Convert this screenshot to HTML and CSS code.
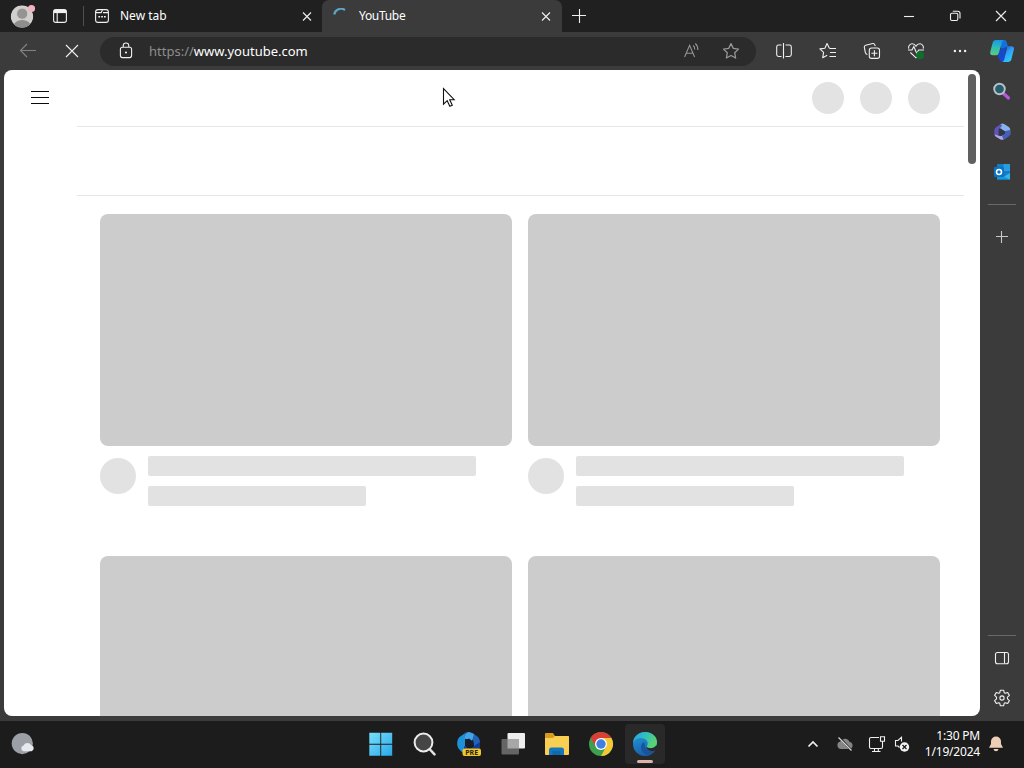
FILE: index.html
```html
<!DOCTYPE html>
<html lang="en">
<head>
    <meta charset="utf-8">
    <title>YouTube</title>
    <link rel="stylesheet" href="styles.css">
</head>
<body>
    <div class="browser">
        <header class="titlebar">
            <div class="cell profile">
                <svg width="26" height="26" viewBox="0 0 26 26">
                    <defs><clipPath id="face"><circle cx="13" cy="13.5" r="11.2"/></clipPath></defs>
                    <g clip-path="url(#face)">
                        <circle cx="13" cy="13.5" r="11.3" fill="#d0cfcd"/>
                        <ellipse cx="13.2" cy="23" rx="8.6" ry="6" fill="#8e8d8b"/>
                        <circle cx="13.2" cy="10.7" r="5.6" fill="#959492" stroke="#d0cfcd"/>
                    </g>
                    <circle cx="22.5" cy="5.5" r="3.6" fill="#f5b3c2"/>
                </svg>
            </div>
            <div class="cell workspaces">
                <svg width="16" height="16" viewBox="0 0 16 16" class="line">
                    <rect x="1.6" y="1.6" width="12.8" height="12.8" rx="2.2"/>
                    <path d="M2 3.5h12" stroke-width="3.2"/>
                    <path d="M5.2 4v10"/>
                </svg>
            </div>
            <div class="divider"></div>
            <div class="tab">
                <svg width="16" height="16" viewBox="0 0 16 16" class="line">
                    <rect x="1.6" y="1.6" width="12.8" height="12.8" rx="2.4"/>
                    <path d="M2 4.6h5.2l1.2-2.5M9 4.6h5"/>
                    <path d="M4.4 8.8h1.7M7.2 8.8h1.7M10 8.8h1.7" stroke-width="1.6"/>
                </svg>
                <span class="tab-title">New tab</span>
                <svg width="10" height="10" viewBox="0 0 10 10" class="line"><path d="M1 1.5l8 8M9 1.5l-8 8"/></svg>
            </div>
            <div class="tab active">
                <svg width="16" height="16" viewBox="0 0 16 16" fill="none"><path d="M1.2 6.5A7 7 0 0 1 12 2" stroke="#58a5c5" stroke-width="2.2"/></svg>
                <span class="tab-title">YouTube</span>
                <svg width="10" height="10" viewBox="0 0 10 10" class="line"><path d="M1 1.5l8 8M9 1.5l-8 8"/></svg>
            </div>
            <div class="cell new-tab">
                <svg width="16" height="16" viewBox="0 0 16 16" class="line"><path d="M1 7.5h14M8.5 1v14"/></svg>
            </div>
            <div class="window-buttons">
                <div class="cell"><svg width="12" height="12" viewBox="0 0 12 12" class="line"><path d="M1 6.5h10"/></svg></div>
                <div class="cell"><svg width="12" height="12" viewBox="0 0 12 12" class="line"><rect x="1.5" y="3.2" width="7.3" height="7.3" rx="1.4"/><path d="M3.8 1.3h4.9q2.3 0 2.3 2.3v4.8"/></svg></div>
                <div class="cell"><svg width="12" height="12" viewBox="0 0 12 12" class="line"><path d="M1 1l10 10M11 1L1 11"/></svg></div>
            </div>
        </header>

        <div class="window-body">
            <div class="main">
                <div class="toolbar">
                    <div class="cell dim">
                        <svg width="18" height="16" viewBox="0 0 18 16" class="line"><path d="M17 7.5H1.5M8 1L1.5 7.5L8 14"/></svg>
                    </div>
                    <div class="cell">
                        <svg width="14" height="14" viewBox="0 0 14 14" class="line"><path d="M1 1l12 12M13 1L1 13"/></svg>
                    </div>
                    <div class="address">
                        <svg width="14" height="18" viewBox="0 0 14 18" class="line">
                            <rect x="1.4" y="5.2" width="11.2" height="10.4" rx="2"/>
                            <path d="M4.2 5V3.8a2.8 2.8 0 0 1 5.6 0V5"/>
                            <circle cx="7" cy="10.5" r=".5"/>
                        </svg>
                        <span class="url"><span class="scheme">https://</span>www.youtube.com</span>
                        <svg width="18" height="18" viewBox="0 0 18 18" class="line muted">
                            <path d="M2.6 15L7.6 3.4L12.6 15M4.3 11.2h6.6M11.2 3.5a5 5 0 0 1 1.5 4M13.3 1.5a8 8 0 0 1 2.5 6.5"/>
                        </svg>
                        <svg width="18" height="18" viewBox="0 0 18 18" class="line muted">
                            <path d="M9 1.6l2.3 4.8 5.2.7-3.8 3.6.9 5.3L9 13.5 4.4 16l.9-5.3L1.5 7.100l5.2-.7z" stroke-linejoin="round" stroke-width="1.3"/>
                        </svg>
                    </div>
                    <div class="cell">
                        <svg width="18" height="18" viewBox="0 0 18 18" class="line"><path d="M6.5 3H3.6Q1.700 3 1.700 4.900v7.700q0 1.900 1.900 1.900h2.900M10.500 3h3.900q1.900 0 1.900 1.900v7.700q0 1.900-1.900 1.900h-3.900M8.500 1v15.500"/></svg>
                    </div>
                    <div class="cell">
                        <svg width="18" height="18" viewBox="0 0 18 18" class="line"><path d="M10.4 6.2L8 1.5 5.9 6.2l-5 .7 3.7 3.5-.9 5.3 4.5-2.4M10.4 6.5H17M11 10.500h6M10.5 14.500H17" stroke-linejoin="round"/></svg>
                    </div>
                    <div class="cell">
                        <svg width="18" height="18" viewBox="0 0 18 18" class="line"><rect x="6.3" y="6" width="10.2" height="10.4" rx="2.2"/><path d="M11.4 8.2v6M8.4 11.200h6M4.400 12.600Q2.700 12 2.300 10.300L1.300 5.200Q1.200 3.600 2.700 3.200L9.800 1.500q1.600-.2 2 1.300l.4 1.400"/></svg>
                    </div>
                    <div class="cell">
                        <svg width="18" height="18" viewBox="0 0 18 18" class="line"><path d="M1.7 6.700C1 4 3 1.800 5.200 1.800c1.700 0 2.900.8 3.800 2.400.9-1.600 2.100-2.400 3.800-2.400 2.200 0 4.200 2.200 3.500 4.900M1 8h4l1.800-3.500 3 7L11.600 8H17M3.400 10.500L9 15.800l4-3.700"/><circle cx="13" cy="13.200" r="4" fill="#0e6f2d" stroke="none"/></svg>
                    </div>
                    <div class="cell">
                        <svg width="16" height="16" viewBox="0 0 16 16" fill="#f0f0f0"><circle cx="2.9" cy="8" r="1.2"/><circle cx="8" cy="8" r="1.2"/><circle cx="13.1" cy="8" r="1.2"/></svg>
                    </div>
                </div>

                <div class="page">
                    <div class="masthead">
                        <svg width="18" height="14" viewBox="0 0 18 14"><path d="M0 .5h18M0 6.5h18M0 12.5h18" stroke="#0a0a0a" fill="none"/></svg>
                        <div class="masthead-buttons">
                            <div class="skeleton-button"></div>
                            <div class="skeleton-button"></div>
                            <div class="skeleton-button"></div>
                        </div>
                    </div>
                    <div class="chips"></div>
                    <div class="feed">
                        <div class="video">
                            <div class="thumbnail"></div>
                            <div class="details">
                                <div class="channel"></div>
                                <div class="meta"><div class="bar"></div><div class="bar short"></div></div>
                            </div>
                        </div>
                        <div class="video">
                            <div class="thumbnail"></div>
                            <div class="details">
                                <div class="channel"></div>
                                <div class="meta"><div class="bar"></div><div class="bar short"></div></div>
                            </div>
                        </div>
                        <div class="video"><div class="thumbnail"></div></div>
                        <div class="video"><div class="thumbnail"></div></div>
                    </div>
                    <div class="scrollbar"></div>
                    <svg class="cursor" width="14" height="22" viewBox="0 0 14 22"><path d="M1.5 1.5v15.700l3.700-3.500 2.600 5.600 2.500-1.100-2.600-5.500h4.500z" fill="#fff" stroke="#111" stroke-width="1.1"/></svg>
                </div>
            </div>

            <aside class="sidebar">
                <div class="cell">
                    <svg width="26" height="26" viewBox="0 0 26 26">
                        <defs>
                            <linearGradient id="copA" x1=".4" y1="0" x2=".3" y2="1"><stop offset="0" stop-color="#1698ea"/><stop offset=".5" stop-color="#2fc0b0"/><stop offset="1" stop-color="#5ecb7c"/></linearGradient>
                            <linearGradient id="copB" x1="0" y1="0" x2=".6" y2="1"><stop offset="0" stop-color="#1650cf"/><stop offset=".5" stop-color="#2fa0fb"/><stop offset="1" stop-color="#2ccbf5"/></linearGradient>
                        </defs>
                        <path d="M12 2h3.500q1.500 0 2 1.500l1.300 4.500-4 4-3-2z" fill="#1370dc"/>
                        <path d="M8 16.500L10 21q1.200 3 3.500 3h2L17 9l-5 2z" fill="#1747ca"/>
                        <path d="M6.500 2h8Q13.300 3 12.700 5L10 14.500q-.8 2.800-3 2.800H4Q.5 17.300 1.300 13.700L3.700 4.500Q4.300 2 6.500 2z" fill="url(#copA)"/>
                        <path d="M17.500 8.300H22q3.600 0 2.800 3.400l-2.400 9.600q-.7 2.700-3.600 2.700h-5.500q1.500-.8 2-2.700l2.600-11q.5-2-.4-2z" fill="url(#copB)"/>
                    </svg>
                </div>
                <div class="cell">
                    <svg width="20" height="20" viewBox="0 0 20 20" fill="none"><path d="M11.500 11.500l5 4.500" stroke="#b557df" stroke-width="3.200" stroke-linecap="round"/><circle cx="7.500" cy="7" r="5.300" fill="#285d70" stroke="#b6c1c8" stroke-width="1.900"/></svg>
                </div>
                <div class="cell">
                    <svg width="18" height="18" viewBox="0 0 18 18">
                        <path d="M7.500 1.200Q9.500 0 11.500 1.300l4 2.500q1.700 1 1.700 3V12L11.500 8 6 4.500z" fill="#85b3ea"/>
                        <path d="M8 1.100l-4.700 3Q1.300 5.300 1.300 7.500v3.200q0 2 1.700 3l2.500 1.200V6.500L9 3z" fill="#6054bd"/>
                        <path d="M1.500 11.500q.3 1.500 1.500 2.200l4.500 2.700q1.500.9 3 0l4-2.600-3-3-4 2.400z" fill="#aca6ef"/>
                        <path d="M17.200 7v3.700q0 2-1.700 3l-5 2.900L9 13l3-2V8z" fill="#455ebb"/>
                        <path d="M6.800 5.500L12 8.800v2.300l-3.500 2-1.700-1z" fill="#30354e"/>
                    </svg>
                </div>
                <div class="cell">
                    <svg width="18" height="18" viewBox="0 0 18 18"><rect x="4" y="1" width="13" height="15.500" rx="1" fill="#157bc9"/><path d="M10.500 1H17v7h-6.500z" fill="#299dde"/><path d="M4 10l7 4 6-4v6.500H4z" fill="#1398dc"/><path d="M11 13.500l6 3V10z" fill="#36b3e4"/><rect x="1" y="4" width="10" height="10" rx="1" fill="#0873c4"/><circle cx="6" cy="9" r="2.500" fill="none" stroke="#fff" stroke-width="1.500"/></svg>
                </div>
                <div class="rule"></div>
                <div class="cell add">
                    <svg width="14" height="14" viewBox="0 0 14 14" class="line muted-light"><path d="M1 6.500h12M6.500 1v12"/></svg>
                </div>
                <div class="rule bottom-rule"></div>
                <div class="cell">
                    <svg width="16" height="16" viewBox="0 0 16 16" class="line"><rect x="1.500" y="2.500" width="13" height="11.200" rx="2"/><path d="M10.500 2.500v11"/></svg>
                </div>
                <div class="cell">
                    <svg width="18" height="18" viewBox="0 0 18 18" class="line"><path d="M7.300 1.300h3.400l.5 2.400 1.100.6 2.400-.8 1.700 2.900-1.900 1.700v1.800l1.900 1.700-1.700 2.900-2.400-.8-1.100.6-.5 2.400H7.300l-.5-2.400-1.100-.6-2.400.8-1.700-2.900 1.900-1.700V8.100L1.600 6.400l1.700-2.900 2.400.8 1.100-.6z" stroke-linejoin="round"/><circle cx="9" cy="9" r="2.100"/></svg>
                </div>
            </aside>
        </div>
    </div>

    <footer class="taskbar">
        <div class="weather">
            <svg width="26" height="24" viewBox="0 0 26 24"><circle cx="11.300" cy="11.600" r="10.600" fill="#9ba0a6"/><path d="M12.500 19.200a3 3 0 0 1 0-5.800 4.500 4.500 0 0 1 7.800-.2 3.100 3.100 0 0 1 .2 6z" fill="#e7ebf0"/></svg>
        </div>
        <div class="apps">
            <div class="app">
                <svg width="24" height="24" viewBox="0 0 24 24"><defs><linearGradient id="win" gradientUnits="userSpaceOnUse" x1="0" y1="0" x2="24" y2="24"><stop offset="0" stop-color="#7be0fb"/><stop offset="1" stop-color="#27a6e8"/></linearGradient></defs><path d="M.3.800h11v11h-11zM12.200.8h11v11h-11zM.3 12.700h11v11h-11zM12.200 12.700h11v11h-11z" fill="url(#win)"/></svg>
            </div>
            <div class="app">
                <svg width="24" height="24" viewBox="0 0 24 24"><path d="M16.500 17l5 5.300" stroke="#e4e4e4" stroke-width="2.500" stroke-linecap="round"/><circle cx="10.500" cy="10.500" r="8.900" fill="#454545" stroke="#ebebeb" stroke-width="2"/></svg>
            </div>
            <div class="app">
                <svg width="26" height="26" viewBox="0 0 26 26">
                    <path d="M10 1.500L3.500 6Q.8 8.500 1.200 14q.3 3.500 3.500 6l5 3.500L13 19l-4-4V8l5-5z" fill="#1e91d8"/>
                    <path d="M9.500 1.700Q13 .3 16.500 2l5 3.500Q24 7.500 24 12v4l-6-1-1-6-9-3z" fill="#2163b5"/>
                    <path d="M12.500 1Q8 3 8.500 7.500L16 10l2-7z" fill="#43a5e5"/>
                    <path d="M8 15l6 3 10-7v5q0 3-3 5l-6 3-7-3z" fill="#143b91"/>
                    <path d="M9.500 9l3.500-1.500 4.500 3.500v3.500L14 16l-4.500-2z" fill="#161f30"/>
                    <rect x="6.500" y="17.500" width="18.500" height="7.500" rx="2" fill="#f0c62f"/>
                    <text x="15.700" y="23.900" text-anchor="middle" class="badge-text">PRE</text>
                </svg>
            </div>
            <div class="app">
                <svg width="26" height="24" viewBox="0 0 26 24"><rect x="7.500" y="1" width="17.500" height="15.500" rx="1" fill="#eee"/><rect x="1.500" y="7" width="17.500" height="15.500" rx="1" fill="#656565"/><path d="M7.500 7H19v9.500H7.500z" fill="#a7a7a7"/></svg>
            </div>
            <div class="app">
                <svg width="26" height="24" viewBox="0 0 26 24"><path d="M1 2q0-1 1-1h7l2 3h13q1 0 1 1v8H1z" fill="#d99b1c"/><path d="M1 6h8l2-2h13q1 0 1 1v17q0 1-1 1H2q-1 0-1-1z" fill="#f8cf52"/><path d="M5 23v-5q0-2.500 2.500-2.500h10Q20 15.500 20 18v5z" fill="#1478bd"/><path d="M8.500 19h8v4h-8z" fill="#0f69aa"/></svg>
            </div>
            <div class="app">
                <svg width="26" height="26" viewBox="0 0 26 26"><circle cx="13" cy="13" r="12" fill="#3da04c"/><path d="M2.600 7A12 12 0 0 1 23.400 7L13 8 8 16z" fill="#d93f35"/><path d="M13 7h10.400A12 12 0 0 1 13 25l5-9z" fill="#f5c936"/><circle cx="13" cy="13" r="6" fill="#fff"/><circle cx="13" cy="13" r="4.700" fill="#3f7fe2"/></svg>
            </div>
            <div class="app running">
                <svg width="26" height="26" viewBox="0 0 26 26">
                    <defs>
                        <linearGradient id="edgeA" x1="0" y1="0" x2="1" y2=".4"><stop offset="0" stop-color="#279fda"/><stop offset=".5" stop-color="#30bfc2"/><stop offset="1" stop-color="#5bd271"/></linearGradient>
                        <linearGradient id="edgeB" x1="0" y1="0" x2=".3" y2="1"><stop offset="0" stop-color="#249bdc"/><stop offset="1" stop-color="#1762ab"/></linearGradient>
                    </defs>
                    <circle cx="13" cy="13" r="12" fill="url(#edgeB)"/>
                    <path d="M1 12C1.500 5 7 1 13 1c7 0 12 4.500 12 10 0 4-3 6.200-6.500 6.200-3 0-4.300-1-3.500-2.300 2.300-4-1-8-6-8-4 0-7 1.800-8 5.100z" fill="url(#edgeA)"/>
                    <path d="M11.500 11C6.500 15 9.500 23.500 16 24q4-.7 7-5-4 1.500-7-.5-4-2-3.200-5.500z" fill="#19549b"/>
                    <path d="M15 15.500q-.2 1.700 3.500 1.700 4 0 5.800-3l1.200 2-2.300 3.600q-4.700 1.500-8.200-2-1-1.500 0-2.300z" fill="#292929"/>
                </svg>
            </div>
        </div>
        <div class="tray">
            <svg width="12" height="8" viewBox="0 0 12 8" class="line"><path d="M1.500 6.500L6 2l4.500 4.500" stroke-width="1.700"/></svg>
            <svg class="cloud" width="18" height="16" viewBox="0 0 18 16"><path d="M5 13a3.800 3.800 0 0 1-.6-7.500A5 5 0 0 1 13.500 6 3.600 3.600 0 0 1 14 13z" fill="#858585"/><path d="M3 1l12 13" stroke="#1c1c1c" stroke-width="2"/><path d="M2.500 1.500l13 13" stroke="#d5d5d5" stroke-width="1.200"/></svg>
            <svg class="network line" width="18" height="18" viewBox="0 0 18 18"><path d="M11 2.500H3Q1.500 2.500 1.500 4v8q0 1.500 1.500 1.500h10q1.500 0 1.500-1.500V8.500M4 16.500h8.500M6.500 14v2.500M10.300 14v2.500M12.500 1.700h4v4.500h-4zM14.500 6.200v3"/></svg>
            <svg class="volume line" width="18" height="18" viewBox="0 0 18 18"><path d="M8.500 3v-.8L5 5.500H2.500V11H5l1.500 1.500M8.500 2.500v4"/><circle cx="11.500" cy="12" r="4.700" fill="#f4f4f4" stroke="none"/><path d="M9.500 10l4 4M13.500 10l-4 4" stroke="#1c1c1c" stroke-width="1.300"/></svg>
            <div class="clock"><span>1:30 PM</span><span>1/19/2024</span></div>
            <svg width="16" height="18" viewBox="0 0 16 18"><path d="M1 12.700L3 9V6.500a5 5 0 0 1 10 0V9l2 3.700zM5.500 14h5q-.4 2.200-2.500 2.200T5.500 14z" fill="#eccfb5"/></svg>
        </div>
    </footer>
</body>
</html>
```
FILE: styles.css
```css
* {
    box-sizing: border-box;
}
body {
    margin: 0;
    width: 1024px;
    height: 768px;
    overflow: hidden;
    display: flex;
    flex-direction: column;
    background: #1c1c1c;
    color: #fff;
    font-family: "Noto Sans", "Open Sans", sans-serif;
    font-size: 12px;
}
svg {
    display: block;
    flex: none;
}
.line {
    fill: none;
    stroke: #f0f0f0;
    stroke-width: 1.1;
}
.muted {
    stroke: #969696;
}
.muted-light {
    stroke: #c8c8c8;
}
.cell {
    display: flex;
    align-items: center;
    justify-content: center;
    flex: none;
}
.browser {
    height: 721px;
    flex: none;
    display: flex;
    flex-direction: column;
    background: #3b3b3b;
}

/* tab strip */
.titlebar {
    height: 32px;
    flex: none;
    display: flex;
    background: #202020;
}
.profile {
    width: 44px;
    padding-bottom: 1px;
}
.workspaces {
    width: 32px;
}
.divider {
    width: 1px;
    height: 20px;
    margin: 6px 0 0 7px;
    background: #505050;
}
.tab {
    width: 238px;
    padding: 0 10px;
    display: flex;
    align-items: center;
}
.tab-title {
    flex: 1;
    margin-left: 10px;
    line-height: 32px;
}
.tab.active {
    width: 240px;
    padding: 0 11px;
    border-radius: 7px 7px 0 0;
    background: #3b3b3b;
}
.tab.active .tab-title {
    letter-spacing: -0.3px;
}
.new-tab {
    width: 34px;
}
.window-buttons {
    margin-left: auto;
    display: flex;
}
.window-buttons .cell {
    width: 46px;
}

/* toolbar */
.window-body {
    flex: 1;
    min-height: 0;
    display: flex;
}
.main {
    width: 980px;
    padding: 0 0 5px 4px;
    display: flex;
    flex-direction: column;
}
.toolbar {
    height: 38px;
    flex: none;
    padding-left: 2px;
    display: flex;
    align-items: center;
}
.toolbar .cell {
    width: 44px;
}
.toolbar .dim {
    opacity: 0.4;
}
.address {
    width: 656px;
    flex: none;
    height: 29px;
    margin: 0 6px;
    padding: 0 16px 0 19px;
    display: flex;
    align-items: center;
    gap: 22px;
    border-radius: 15px;
    background: #2b2b2b;
}
.url {
    flex: 1;
    margin-left: -6px;
    font-size: 13px;
}
.scheme {
    color: #8e8e8e;
}

/* page */
.page {
    position: relative;
    flex: 1;
    min-height: 0;
    overflow: hidden;
    border-radius: 8px;
    background: #fff;
}
.masthead {
    height: 56px;
    padding: 0 40px 0 27px;
    display: flex;
    align-items: center;
    justify-content: space-between;
}
.masthead-buttons {
    display: flex;
    gap: 16px;
}
.skeleton-button {
    width: 32px;
    height: 32px;
    border-radius: 50%;
    background: #e3e3e3;
}
.chips {
    height: 70px;
    margin: 0 16px 0 73px;
    border: solid #e6e6e6;
    border-width: 1px 0;
}
.feed {
    display: grid;
    grid-template-columns: 412px 412px;
    gap: 0 16px;
    padding: 18px 0 0 96px;
}
.video {
    height: 342px;
}
.thumbnail {
    height: 232px;
    border-radius: 8px;
    background: #ccc;
}
.details {
    display: flex;
    gap: 12px;
    padding-top: 10px;
}
.channel {
    width: 36px;
    height: 36px;
    margin-top: 2px;
    border-radius: 50%;
    background: #e2e2e2;
}
.bar {
    width: 328px;
    height: 20px;
    margin-bottom: 10px;
    border-radius: 2px;
    background: #e2e2e2;
}
.short {
    width: 218px;
}
.scrollbar {
    position: absolute;
    top: 4px;
    right: 4px;
    width: 8px;
    height: 90px;
    border-radius: 4px;
    background: #606060;
}
.cursor {
    position: absolute;
    left: 438px;
    top: 17px;
}

/* right sidebar */
.sidebar {
    width: 44px;
    padding-bottom: 3px;
    display: flex;
    flex-direction: column;
}
.sidebar .cell {
    height: 40px;
}
.sidebar .cell:first-child {
    padding: 0 1px 2px 0;
}
.rule {
    height: 1px;
    flex: none;
    margin: 12px 8px;
    background: #696969;
}
.bottom-rule {
    margin: auto 8px 2px;
}

/* taskbar */
.taskbar {
    height: 47px;
    padding-bottom: 1px;
    display: flex;
    align-items: center;
    background: #1c1c1c;
}
.weather {
    width: 361px;
    flex: none;
    padding-left: 11px;
}
.apps {
    display: flex;
    gap: 4px;
}
.app {
    position: relative;
    width: 40px;
    height: 40px;
    display: flex;
    align-items: center;
    justify-content: center;
    border-radius: 4px;
}
.running {
    background: #292929;
}
.running::after {
    content: "";
    position: absolute;
    bottom: 1px;
    width: 16px;
    height: 3px;
    border-radius: 2px;
    background: #dcb5a8;
}
.badge-text {
    font-size: 7px;
    font-weight: 700;
    fill: #2b2508;
}
.tray {
    margin-left: auto;
    padding-right: 20px;
    display: flex;
    align-items: center;
}
.tray svg {
    margin-right: 17px;
}
.tray .cloud {
    margin-right: 14px;
}
.tray .network {
    margin-right: 7px;
}
.tray .volume {
    margin-right: 14px;
}
.clock {
    display: flex;
    flex-direction: column;
    align-items: flex-end;
    line-height: 16px;
    margin-right: 8px;
    letter-spacing: -0.2px;
}
.tray svg:last-child {
    margin-right: 0;
}
```
